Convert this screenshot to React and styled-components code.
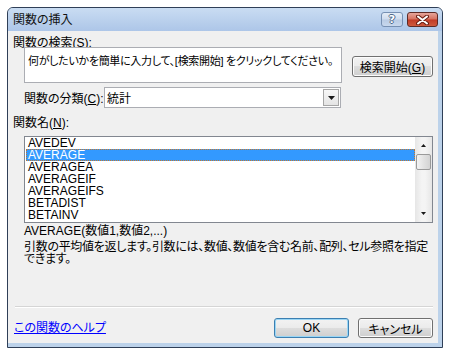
import React from 'react';
import styled, { createGlobalStyle } from 'styled-components';

const GlobalStyle = createGlobalStyle`
  body {
    margin: 0;
    background: #fff;
    font-family: "Liberation Sans", "Noto Sans CJK JP", sans-serif;
    font-size: 12px;
    color: #000;
    font-feature-settings: "palt";
  }
`;

const Page = styled.div`
  padding: 7px;
`;

const Window = styled.div`
  width: 434px;
  border: 1px solid #2f3f57;
  border-radius: 6px 6px 0 0;
  overflow: hidden;
  background: #bcd2ea;
`;

const TitleBar = styled.div`
  height: 23px;
  display: flex;
  align-items: center;
  padding: 0 4px 0 5px;
  background: linear-gradient(#c9dcf2, #adc6e8);
`;

const Title = styled.span`
  font-size: 12px;
  line-height: 14px;
  color: #101010;
`;

const CaptionButton = styled.div`
  box-sizing: border-box;
  width: ${(p) => p.$w}px;
  height: 15px;
  margin-left: ${(p) => p.$gap}px;
  border: 1px solid ${(p) => (p.$close ? '#5e2a26' : '#7790b3')};
  border-radius: 3px;
  display: flex;
  align-items: center;
  justify-content: center;
  background: ${(p) =>
    p.$close
      ? 'linear-gradient(#e6a59b 0%, #d6705f 48%, #c13b27 52%, #cf5a3e 100%)'
      : 'linear-gradient(#e4ecf7 0%, #cfdcee 48%, #b9cbe4 52%, #c8d8ee 100%)'};
  &:first-of-type {
    margin-left: auto;
  }
`;

const HelpGlyph = styled.span`
  font-family: "DejaVu Sans", sans-serif;
  font-weight: bold;
  font-size: 11px;
  line-height: 11px;
  color: #fff;
  text-shadow: -1px 0 #4d6789, 1px 0 #4d6789, 0 -1px #4d6789, 0 1px #4d6789;
`;

const Body = styled.div`
  background: #f0f0f0;
  border-right: 4px solid #bcd2ea;
  border-bottom: 4px solid #bcd2ea;
  padding: 6px 0 5px;
  display: flex;
  flex-direction: column;
`;

const Label = styled.div`
  line-height: 12px;
  height: 12px;
  white-space: nowrap;
  padding-left: ${(p) => p.$indent || 5}px;
  margin-top: ${(p) => p.$top || 0}px;
`;

const SearchRow = styled.div`
  display: flex;
  align-items: flex-start;
  padding-left: 16px;
  margin-top: -2px;
`;

const SearchBox = styled.div`
  box-sizing: border-box;
  width: 318px;
  height: 36px;
  border: 1px solid #abadb3;
  background: #fff;
  padding: 7px 3px 0;
  font-size: 11px;
  line-height: 12px;
  letter-spacing: -0.3px;
  white-space: nowrap;
  overflow: hidden;
`;

const Button = styled.button`
  box-sizing: border-box;
  width: ${(p) => p.$w}px;
  height: ${(p) => p.$h}px;
  margin-top: ${(p) => p.$top || 0}px;
  margin-left: ${(p) => p.$left || 0}px;
  padding: 0;
  font: inherit;
  color: #000;
  border: 1px solid ${(p) => (p.$default ? '#3c7fb1' : '#707070')};
  border-radius: 3px;
  background: linear-gradient(#f2f2f2 0%, #ebebeb 49%, #dddddd 50%, #cfcfcf 100%);
  box-shadow: inset 0 0 0 1px ${(p) => (p.$default ? '#9ad6f5' : '#fcfcfc')};
  white-space: nowrap;
`;

const CategoryRow = styled.div`
  display: flex;
  align-items: center;
  padding-left: 16px;
  margin-top: 4px;
  height: 21px;
`;

const CategoryLabel = styled.span`
  flex: 0 0 80px;
  white-space: nowrap;
`;

const Select = styled.div`
  box-sizing: border-box;
  width: 237px;
  height: 21px;
  border: 1px solid #abadb3;
  background: #fff;
  display: flex;
  align-items: center;
  padding-left: 2px;
`;

const DropButton = styled.div`
  box-sizing: border-box;
  width: 16px;
  height: 17px;
  margin: 0 1px 0 auto;
  border: 1px solid #a6a6a6;
  background: linear-gradient(#f7f7f7, #e4e4e4);
  display: flex;
  align-items: center;
  justify-content: center;
`;

const ListBox = styled.div`
  box-sizing: border-box;
  width: 409px;
  height: 87px;
  margin: 7px 0 0 16px;
  border: 1px solid #828790;
  background: #fff;
  display: flex;
`;

const Items = styled.div`
  flex: 1;
  padding: 0 0 0 1px;
  overflow: hidden;
`;

const Item = styled.div`
  height: 12px;
  line-height: 12px;
  padding-left: 2px;
  white-space: nowrap;
  background: ${(p) => (p.$selected ? '#3399ff' : 'transparent')};
  color: ${(p) => (p.$selected ? '#fff' : '#000')};
  outline: ${(p) => (p.$selected ? '1px dotted #c4782c' : 'none')};
  outline-offset: -1px;
`;

const ScrollBar = styled.div`
  width: 17px;
  display: flex;
  flex-direction: column;
  background: linear-gradient(90deg, #e6e6e6, #f4f4f4 40%, #f4f4f4 60%, #e6e6e6);
`;

const ScrollArrow = styled.div`
  height: 17px;
  display: flex;
  align-items: center;
  justify-content: center;
  margin-top: ${(p) => (p.$down ? 'auto' : '0')};
`;

const Thumb = styled.div`
  box-sizing: border-box;
  width: 15px;
  height: 16px;
  margin: 0 0 0 1px;
  border: 1px solid #9a9a9a;
  border-radius: 2px;
  background: linear-gradient(90deg, #f3f3f3, #e2e2e2 50%, #d3d3d3);
`;

const Syntax = styled.div`
  margin: 2px 0 0 16px;
  line-height: 12px;
  white-space: nowrap;
`;

const Description = styled.div`
  margin: 4px 0 0 16px;
  line-height: 12px;
  letter-spacing: -0.3px;
  white-space: nowrap;
`;

const Separator = styled.div`
  margin: 41px 5px 0 7px;
  height: 1px;
  background: #d5d5d5;
  border-bottom: 1px solid #fff;
`;

const Footer = styled.div`
  display: flex;
  align-items: center;
  margin-top: 10px;
  padding: 0 5px 0 6px;
  height: 20px;
`;

const HelpLink = styled.a`
  color: #0000ff;
  text-decoration: underline;
  margin-right: auto;
  line-height: 12px;
`;

const functions = ['AVEDEV', 'AVERAGE', 'AVERAGEA', 'AVERAGEIF', 'AVERAGEIFS', 'BETADIST', 'BETAINV'];

const Triangle = ({ down, w = 7, h = 4 }) => (
  <svg width={w} height={h} viewBox={`0 0 ${w} ${h}`}>
    <polygon
      points={down ? `0,0 ${w},0 ${w / 2},${h}` : `0,${h} ${w},${h} ${w / 2},0`}
      fill="#1a1a1a"
    />
  </svg>
);

const CloseGlyph = () => (
  <svg width="13" height="10" viewBox="0 0 13 10">
    <path d="M2 1.5 L11 8.5 M11 1.5 L2 8.5" stroke="#6b1e14" strokeWidth="4" strokeLinecap="round" />
    <path d="M2 1.5 L11 8.5 M11 1.5 L2 8.5" stroke="#fff" strokeWidth="2" strokeLinecap="round" />
  </svg>
);

const App = () => (
  <Page>
    <GlobalStyle />
    <Window>
      <TitleBar>
        <Title>関数の挿入</Title>
        <CaptionButton $w={22} $gap={0}>
          <HelpGlyph>?</HelpGlyph>
        </CaptionButton>
        <CaptionButton $w={31} $gap={4} $close>
          <CloseGlyph />
        </CaptionButton>
      </TitleBar>

      <Body>
        <Label>
          関数の検索(<u>S</u>):
        </Label>
        <SearchRow>
          <SearchBox>何がしたいかを簡単に入力して、[検索開始] をクリックしてください。</SearchBox>
          <Button $w={81} $h={21} $top={9} $left={10}>
            検索開始(<u>G</u>)
          </Button>
        </SearchRow>

        <CategoryRow>
          <CategoryLabel>
            関数の分類(<u>C</u>):
          </CategoryLabel>
          <Select>
            統計
            <DropButton>
              <Triangle down />
            </DropButton>
          </Select>
        </CategoryRow>

        <Label $top={9}>
          関数名(<u>N</u>):
        </Label>
        <ListBox>
          <Items>
            {functions.map((name) => (
              <Item key={name} $selected={name === 'AVERAGE'}>
                {name}
              </Item>
            ))}
          </Items>
          <ScrollBar>
            <ScrollArrow>
              <Triangle w={5} h={3} />
            </ScrollArrow>
            <Thumb />
            <ScrollArrow $down>
              <Triangle down w={5} h={3} />
            </ScrollArrow>
          </ScrollBar>
        </ListBox>

        <Syntax>AVERAGE(数値1,数値2,...)</Syntax>
        <Description>
          引数の平均値を返します。引数には、数値、数値を含む名前、配列、セル参照を指定
          <br />
          できます。
        </Description>

        <Separator />

        <Footer>
          <HelpLink href="#help">この関数のヘルプ</HelpLink>
          <Button $w={75} $h={20} $default>
            OK
          </Button>
          <Button $w={75} $h={20} $left={9}>
            キャンセル
          </Button>
        </Footer>
      </Body>
    </Window>
  </Page>
);

export default App;
